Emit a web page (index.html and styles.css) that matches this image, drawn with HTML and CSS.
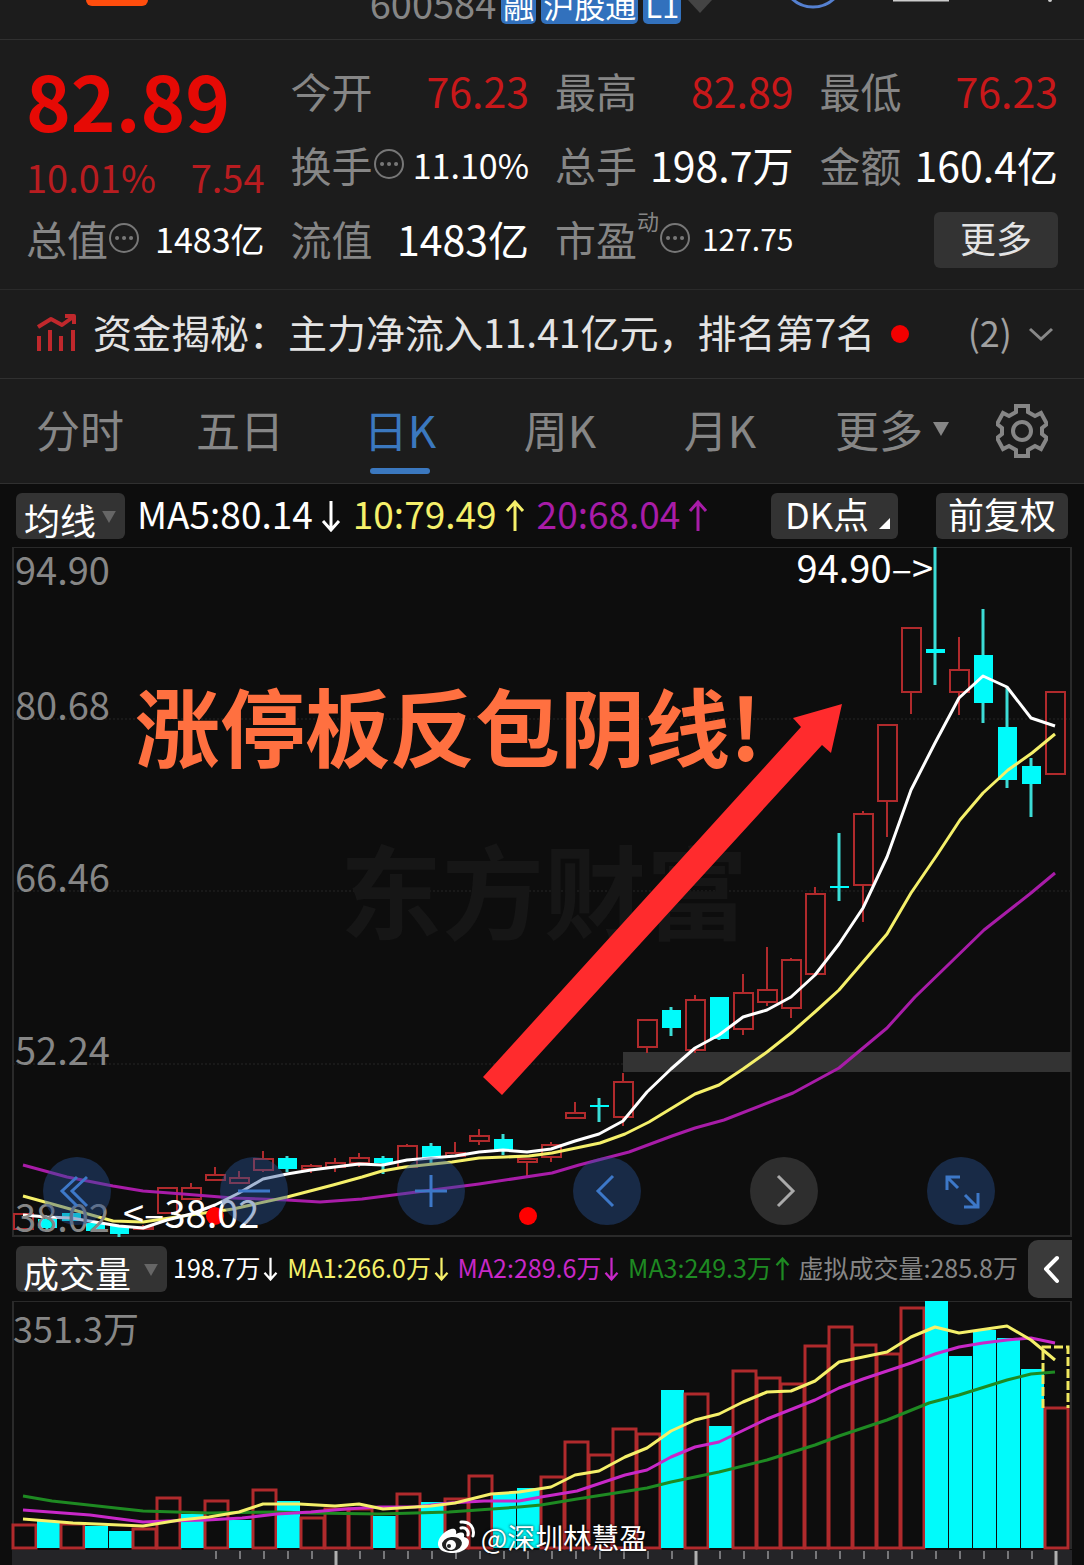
FILE: index.html
```html
<!DOCTYPE html>
<html lang="zh-CN">
<head>
    <meta charset="UTF-8">
    <meta name="viewport" content="width=device-width, initial-scale=1.0">
    <title>600584 日K</title>
    <link rel="stylesheet" href="styles.css">
</head>
<body>
    <header class="topbar">
        <div class="topbar-left"><span class="app-tab"></span></div>
        <div class="stock-code">
            <span class="code">600584</span>
            <span class="badge">融</span>
            <span class="badge">沪股通</span>
            <span class="badge">L1</span>
            <svg class="code-arrow" width="28" height="14" viewBox="0 0 28 14"><path d="M2 0H26L14 13Z" fill="#444"/></svg>
        </div>
        <div class="topbar-right">
            <svg width="264" height="12" viewBox="0 0 264 12">
                <circle cx="25" cy="-24" r="31" fill="none" stroke="#5580d0" stroke-width="3"/>
                <path d="M105 0H161" stroke="#ccc" stroke-width="3"/>
                <circle cx="262" cy="0" r="2" fill="#ccc"/>
            </svg>
        </div>
    </header>

    <section class="quote">
        <div class="price-box">
            <div class="price">82.89</div>
            <div class="change"><span>10.01%</span><span>7.54</span></div>
        </div>
        <div class="cell"><span class="label">今开</span><span class="value up">76.23</span></div>
        <div class="cell"><span class="label">最高</span><span class="value up">82.89</span></div>
        <div class="cell"><span class="label">最低</span><span class="value up">76.23</span></div>
        <div class="cell">
            <span class="label">换手<svg class="info" viewBox="0 0 32 32"><circle cx="16" cy="16" r="14"/><path d="M9 16h.1M16 16h.1M23 16h.1"/></svg></span>
            <span class="value medium">11.10%</span>
        </div>
        <div class="cell"><span class="label">总手</span><span class="value">198.7万</span></div>
        <div class="cell"><span class="label">金额</span><span class="value">160.4亿</span></div>
        <div class="cell">
            <span class="label">总值<svg class="info" viewBox="0 0 32 32"><circle cx="16" cy="16" r="14"/><path d="M9 16h.1M16 16h.1M23 16h.1"/></svg></span>
            <span class="value medium">1483亿</span>
        </div>
        <div class="cell"><span class="label">流值</span><span class="value">1483亿</span></div>
        <div class="cell">
            <span class="label">市盈<sup>动</sup><svg class="info" viewBox="0 0 32 32"><circle cx="16" cy="16" r="14"/><path d="M9 16h.1M16 16h.1M23 16h.1"/></svg></span>
            <span class="value small">127.75</span>
        </div>
        <div class="cell cell-end"><button type="button" class="more-btn">更多</button></div>
    </section>

    <section class="news">
        <svg class="news-icon" viewBox="0 0 40 40">
            <path d="M2 13L15 5L26 11L37 3M29 2H38V10" stroke-linejoin="round"/>
            <path d="M3 22V37M14 16V37M25 22V37M37 16V37"/>
        </svg>
        <a href="#" class="news-text">资金揭秘：主力净流入11.41亿元，排名第7名</a>
        <span class="news-dot"></span>
        <span class="news-count">(2)</span>
        <svg class="news-more" viewBox="0 0 26 16"><path d="M2 3L13 13L24 3"/></svg>
    </section>

    <nav class="tabs">
        <a href="#">分时</a>
        <a href="#">五日</a>
        <a href="#" class="active">日K</a>
        <a href="#">周K</a>
        <a href="#">月K</a>
        <a href="#" class="tab-more">更多<svg width="16" height="14" viewBox="0 0 16 14"><path d="M0 0H16L8 14Z"/></svg></a>
        <button type="button" class="gear" aria-label="设置">
            <svg viewBox="0 0 52 54">
                <path d="M20 2H32V8L39 12L45 9L51 20L46 24V30L51 34L45 45L39 42L32 46V52H20V46L13 42L7 45L1 34L6 30V24L1 20L7 9L13 12L20 8Z"/>
                <circle cx="26" cy="27" r="9"/>
            </svg>
        </button>
    </nav>

    <div class="indicator">
        <div class="picker">
            <select id="maSelect" aria-label="主图指标"><option>均线</option></select>
            <svg class="caret" viewBox="0 0 16 14"><path d="M0 0H16L8 14Z"/></svg>
        </div>
        <div class="ma-values">
            <span class="ma5">MA5:80.14<svg class="arrow" viewBox="0 0 20 32"><path d="M10 1V30M2 21L10 30L18 21"/></svg></span>
            <span class="ma10">10:79.49<svg class="arrow" viewBox="0 0 20 32"><path d="M10 31V2M2 11L10 2L18 11"/></svg></span>
            <span class="ma20">20:68.04<svg class="arrow" viewBox="0 0 20 32"><path d="M10 31V2M2 11L10 2L18 11"/></svg></span>
        </div>
        <button type="button" class="chip dk">DK点<svg width="11" height="11" viewBox="0 0 11 11"><path d="M11 0V11H0Z" fill="#fff"/></svg></button>
        <button type="button" class="chip">前复权</button>
    </div>

    <section class="chart">
        <svg class="plot" viewBox="0 547 1084 690">
            <path class="frame" d="M13 547H1071V1236H13Z"/>
            <path class="grid" d="M13 719H1071M13 891H1071M13 1064H1071"/>
            <text class="brand" x="340" y="932">东方财富</text>
            <rect x="623" y="1052" width="448" height="20" fill="#333"/>
            <g id="candles"></g>
            <polyline class="line ma20" points="23,1165 67,1177 113,1186 143,1191 183,1194 233,1198 287,1200 320,1202 362,1199 409,1193 479,1184 552,1173 579,1165 629,1152 672,1136 695,1128 724,1120 793,1093 839,1068 863,1048 887,1028 915,997 948,965 984,930 1031,893 1055,873"/>
            <polyline class="line ma10" points="23,1196 63,1207 113,1221 143,1222 183,1216 233,1209 287,1197 333,1185 362,1177 382,1171 405,1167 452,1162 479,1158 505,1157 529,1156 552,1153 600,1143 625,1134 649,1122 672,1108 695,1094 719,1085 743,1069 767,1052 791,1033 816,1011 839,990 863,962 887,934 911,893 937,855 960,820 983,793 1008,770 1032,753 1055,734"/>
            <polyline class="line ma5" points="23,1215 47,1217 71,1218 95,1222 119,1226 143,1228 167,1220 191,1214 215,1205 239,1193 263,1179 287,1174 311,1170 335,1167 359,1164 383,1165 407,1160 431,1158 455,1156 479,1152 503,1150 527,1152 551,1149 575,1141 599,1134 623,1121 647,1092 671,1069 695,1048 719,1035 743,1017 767,1010 791,997 815,975 839,944 863,908 887,857 911,790 935,743 959,698 983,676 1007,687 1031,718 1055,726"/>
            <circle cx="215" cy="1216" r="9" fill="#f00"/>
            <circle cx="528" cy="1216" r="9" fill="#f00"/>
            <g class="axis">
                <text x="15" y="585">94.90</text>
                <text x="15" y="720">80.68</text>
                <text x="15" y="892">66.46</text>
                <text x="15" y="1065">52.24</text>
                <text x="15" y="1232">38.02</text>
            </g>
            <text class="mark" x="933" y="583" text-anchor="end">94.90–&gt;</text>
            <text class="mark" x="123" y="1228">&lt;–38.02</text>
            <text class="headline" x="135" y="761">涨停板反包阴线!</text>
            <path d="M842 704L831 753L822 745L502 1095L483 1077L801 727L793 718Z" fill="#ff2b2d"/>
        </svg>
        <div class="chart-tools">
            <button type="button" aria-label="最早"><svg viewBox="0 0 68 68"><path d="M34 20L19 34L34 49M44 20L29 34L44 49"/></svg></button>
            <button type="button" aria-label="缩小"><svg viewBox="0 0 68 68"><path d="M18 34H50"/></svg></button>
            <button type="button" aria-label="放大"><svg viewBox="0 0 68 68"><path d="M18 34H50M34 18V50"/></svg></button>
            <button type="button" aria-label="前移"><svg viewBox="0 0 68 68"><path d="M40 19L25 34L40 49"/></svg></button>
            <button type="button" aria-label="后移" class="off"><svg viewBox="0 0 68 68"><path d="M28 19L43 34L28 49"/></svg></button>
            <button type="button" aria-label="全屏"><svg viewBox="0 0 68 68"><path d="M33 20H20V33M20 20L31 31M51 36V50H37M50 50L38 38"/></svg></button>
        </div>
    </section>

    <div class="indicator volume-bar">
        <div class="picker">
            <select id="volSelect" aria-label="副图指标"><option>成交量</option></select>
            <svg class="caret" viewBox="0 0 16 14"><path d="M0 0H16L8 14Z"/></svg>
        </div>
        <div class="vol-values">
            <span class="ma5">198.7万<svg class="arrow" viewBox="0 0 20 32"><path d="M10 1V30M2 21L10 30L18 21"/></svg></span>
            <span class="ma10">MA1:266.0万<svg class="arrow" viewBox="0 0 20 32"><path d="M10 1V30M2 21L10 30L18 21"/></svg></span>
            <span class="vol-ma2">MA2:289.6万<svg class="arrow" viewBox="0 0 20 32"><path d="M10 1V30M2 21L10 30L18 21"/></svg></span>
            <span class="vol-ma3">MA3:249.3万<svg class="arrow" viewBox="0 0 20 32"><path d="M10 31V2M2 11L10 2L18 11"/></svg></span>
            <span class="virtual">虚拟成交量:285.8万</span>
        </div>
        <button type="button" class="expand" aria-label="展开"><svg viewBox="0 0 44 58"><path d="M29 18L18 29L29 41"/></svg></button>
    </div>

    <section class="chart">
        <svg class="plot" viewBox="0 1301 1084 264">
            <rect x="12" y="1550" width="1060" height="15" fill="#242427"/>
            <path class="frame" d="M13 1549V1301H1071V1549"/>
            <text class="axis-vol" x="13" y="1343">351.3万</text>
            <g id="volumes"></g>
            <path class="forecast" d="M1043 1408V1347H1068V1408"/>
            <polyline class="line vol-ma3" points="23,1496 52,1501 143,1511 209,1513 277,1512 311,1513 380,1514 449,1512 519,1507 541,1505 577,1499 622,1492 647,1488 671,1482 719,1472 767,1460 815,1445 839,1436 887,1420 929,1403 959,1395 1007,1380 1031,1374 1055,1372"/>
            <polyline class="line vol-ma2" points="23,1510 90,1515 143,1522 167,1521 207,1520 242,1518 277,1514 311,1512 346,1509 380,1507 415,1507 449,1503 484,1501 519,1501 541,1497 577,1491 601,1483 625,1475 647,1470 671,1457 695,1447 719,1442 767,1419 815,1400 839,1388 863,1379 911,1363 935,1354 959,1347 983,1343 1007,1340 1031,1338 1055,1343"/>
            <polyline class="line ma10" points="23,1519 73,1523 143,1526 180,1520 209,1517 239,1512 263,1504 299,1504 335,1506 359,1504 383,1509 415,1507 431,1506 455,1503 491,1494 519,1492 551,1487 575,1475 599,1471 625,1457 647,1448 671,1431 695,1420 719,1414 743,1402 767,1392 791,1391 815,1381 839,1362 887,1352 911,1337 935,1327 959,1333 1007,1326 1031,1340 1055,1360"/>
            <g id="ticks"></g>
        </svg>
        <div class="credit">
            <svg viewBox="0 0 38 34">
                <path d="M14 9C7 11 0 19 1 25C2 31 9 33 16 33C25 33 32 28 32 22C32 19 30 18 27 17C28 13 26 11 19 14C20 10 18 8 14 9Z" fill="#fff"/>
                <ellipse cx="15" cy="24" rx="10" ry="7" fill="#222" transform="rotate(-8 15 24)"/>
                <circle cx="14" cy="25" r="5" fill="#fff"/>
                <circle cx="12" cy="26" r="2" fill="#222"/>
                <path d="M24 8C29 7 32 11 31 15M24 2C33 1 38 8 36 16" fill="none" stroke="#fff" stroke-width="3" stroke-linecap="round"/>
            </svg>
            <span>@深圳林慧盈</span>
        </div>
    </section>

    <script>
        const STEP = 24;
        const FIRST_X = 23;

        // [direction, high, body top, body bottom, low]
        const candles = [
            ['up', 1214, 1214, 1229, 1229], ['down', 1218, 1219, 1228, 1230], ['down', 1213, 1213, 1221, 1221],
            ['down', 1223, 1223, 1231, 1231], ['down', 1226, 1226, 1234, 1237], ['up', 1225, 1227, 1229, 1229],
            ['up', 1188, 1188, 1213, 1213], ['up', 1183, 1188, 1199, 1199], ['up', 1167, 1175, 1180, 1180],
            ['up', 1171, 1178, 1183, 1183], ['up', 1151, 1159, 1170, 1172], ['down', 1156, 1158, 1169, 1172],
            ['up', 1164, 1166, 1169, 1173], ['up', 1158, 1163, 1167, 1172], ['up', 1153, 1158, 1163, 1167],
            ['down', 1156, 1158, 1163, 1174], ['up', 1144, 1146, 1167, 1167], ['down', 1143, 1146, 1158, 1163],
            ['up', 1142, 1153, 1156, 1156], ['up', 1129, 1136, 1141, 1145], ['down', 1134, 1139, 1150, 1155],
            ['up', 1158, 1159, 1162, 1176], ['up', 1142, 1145, 1157, 1162], ['up', 1102, 1113, 1118, 1118],
            ['down', 1098, 1105, 1107, 1122], ['up', 1073, 1082, 1117, 1126], ['up', 1020, 1020, 1047, 1053],
            ['down', 1007, 1010, 1028, 1036], ['up', 995, 1000, 1050, 1053], ['down', 997, 997, 1039, 1040],
            ['up', 974, 993, 1029, 1035], ['up', 947, 990, 1002, 1006], ['up', 958, 960, 1008, 1018],
            ['up', 887, 894, 974, 974], ['down', 833, 886, 888, 901], ['up', 811, 814, 885, 922],
            ['up', 725, 725, 801, 837], ['up', 628, 628, 692, 714], ['down', 547, 649, 653, 685],
            ['up', 637, 670, 692, 715], ['down', 609, 655, 703, 723], ['down', 687, 727, 780, 788],
            ['down', 758, 766, 784, 817], ['up', 692, 692, 774, 774]
        ];

        // [direction, top of the bar]
        const VOL_BASE = 1548;
        const volumes = [
            ['up', 1525], ['down', 1521], ['up', 1524], ['down', 1526], ['down', 1531], ['up', 1529],
            ['up', 1498], ['down', 1514], ['up', 1501], ['down', 1520], ['up', 1490], ['down', 1501],
            ['up', 1518], ['up', 1509], ['up', 1509], ['down', 1516], ['up', 1494], ['down', 1502],
            ['up', 1499], ['up', 1476], ['down', 1493], ['down', 1488], ['up', 1477], ['up', 1442],
            ['up', 1455], ['up', 1429], ['up', 1434], ['down', 1390], ['up', 1394], ['down', 1426],
            ['up', 1371], ['up', 1378], ['up', 1384], ['up', 1346], ['up', 1327], ['up', 1345],
            ['up', 1354], ['up', 1308], ['down', 1301], ['down', 1356], ['down', 1330], ['down', 1338],
            ['down', 1369], ['up', 1408]
        ];

        function rect(x, y, width, height, dir) {
            return `<rect class="${dir}" x="${x}" y="${y}" width="${width}" height="${height}"/>`;
        }

        document.getElementById('candles').innerHTML = candles.map(([dir, high, top, bottom, low], i) => {
            const x = FIRST_X + i * STEP;
            const wick = `<path class="wick-${dir}" d="M${x} ${high}V${top}M${x} ${bottom}V${low}"/>`;
            return wick + rect(x - 9, top, 19, bottom - top, dir);
        }).join('');

        document.getElementById('volumes').innerHTML = volumes.map(([dir, top], i) => {
            const x = FIRST_X + i * STEP;
            return rect(x - 10, top, 23, VOL_BASE - top, dir);
        }).join('');

        let ticks = '';
        for (let i = 8; i < 44; i++) {
            const x = FIRST_X + 1 + i * STEP;
            const isLong = (i - 13) % 15 === 0;
            ticks += `<path class="${isLong ? 'tick-long' : 'tick'}" d="M${x} 1551V${isLong ? 1565 : 1559}"/>`;
        }
        document.getElementById('ticks').innerHTML = ticks;
    </script>
</body>
</html>
```
FILE: styles.css
```css
* {
    box-sizing: border-box;
}

body {
    margin: 0;
    background-color: #0d0d0d;
    color: #fff;
    font-family: "Noto Sans CJK SC", "Noto Sans", sans-serif;
}

a {
    color: inherit;
    text-decoration: none;
}

button,
select {
    font-family: inherit;
    border: none;
    padding: 0;
    margin: 0;
    cursor: pointer;
}

/* Top bar, scrolled half out of view */
.topbar {
    display: grid;
    grid-template-columns: 1fr auto 1fr;
    height: 40px;
    overflow: hidden;
    background-color: #1c1c1c;
    border-bottom: 1px solid #303030;
}

.topbar-left {
    padding-left: 86px;
}

.app-tab {
    display: block;
    width: 62px;
    height: 6px;
    border-radius: 0 0 8px 8px;
    background-color: #ff4d0d;
}

.stock-code {
    display: flex;
    align-items: flex-end;
    gap: 5px;
    height: 24px;
    font-size: 31px;
    line-height: 38px;
}

.code {
    color: #868686;
    font-size: 38px;
    line-height: 42px;
}

.badge {
    padding: 0 2px;
    border-radius: 5px;
    background-color: #3271bd;
}

.code-arrow {
    align-self: flex-start;
}

.topbar-right {
    display: flex;
    justify-content: flex-end;
    padding-right: 32px;
}

/* Quote */
.quote {
    display: grid;
    grid-template-columns: repeat(4, 1fr);
    grid-auto-rows: 74px;
    column-gap: 26px;
    padding: 15px 26px 12px;
    background-color: #1c1c1c;
    border-bottom: 1px solid #2a2a2a;
}

.price-box {
    grid-row: span 2;
}

.price {
    color: #e60a05;
    font-size: 76px;
    font-weight: 700;
    line-height: 88px;
}

.change {
    display: flex;
    justify-content: space-between;
    margin-top: 8px;
    color: #b81c20;
    font-size: 38px;
    line-height: 52px;
}

.cell {
    display: flex;
    align-items: center;
    justify-content: space-between;
    padding-bottom: 4px;
    white-space: nowrap;
}

.cell-end {
    justify-content: flex-end;
    padding-bottom: 0;
}

.label {
    display: flex;
    align-items: center;
    color: #868686;
    font-size: 41px;
    line-height: 60px;
}

.label sup {
    align-self: flex-start;
    font-size: 22px;
    line-height: 24px;
}

.info {
    width: 32px;
    height: 32px;
    fill: none;
    stroke: #777;
    stroke-width: 2;
}

.info path {
    stroke-width: 4;
    stroke-linecap: round;
}

.value {
    font-size: 41px;
}

.value.medium {
    font-size: 34px;
}

.value.small {
    font-size: 30px;
}

.value.up {
    color: #c8181a;
}

.more-btn {
    width: 124px;
    height: 56px;
    padding-bottom: 6px;
    border-radius: 6px;
    background-color: #333;
    color: #e4e4e4;
    font-size: 36px;
    line-height: 50px;
}

/* News line */
.news {
    display: flex;
    align-items: center;
    height: 89px;
    padding: 0 30px 0 36px;
    background-color: #1c1c1c;
    border-bottom: 1px solid #303030;
    white-space: nowrap;
}

.news-icon {
    width: 40px;
    height: 40px;
    margin-right: 17px;
    fill: none;
    stroke: #c0282c;
    stroke-width: 4;
}

.news-text {
    padding-bottom: 6px;
    color: #e4e4e4;
    font-size: 39px;
}

.news-dot {
    width: 18px;
    height: 18px;
    margin-left: 16px;
    border-radius: 50%;
    background-color: #f20000;
}

.news-count {
    margin-left: auto;
    padding-bottom: 6px;
    color: #a0a0a0;
    font-size: 36px;
}

.news-more {
    width: 26px;
    height: 16px;
    margin-left: 16px;
    fill: none;
    stroke: #888;
    stroke-width: 3;
}

/* Period tabs */
.tabs {
    display: grid;
    grid-template-columns: repeat(6, 160fr) 124fr;
    align-items: center;
    justify-items: center;
    height: 105px;
    background-color: #1c1c1c;
    border-bottom: 1px solid #303030;
    color: #868686;
    font-size: 44px;
    line-height: 82px;
}

.tabs a {
    padding-bottom: 4px;
}

.tabs .active {
    position: relative;
    color: #3b78bf;
}

.tabs .active::after {
    content: "";
    position: absolute;
    left: 6px;
    right: 6px;
    bottom: 0;
    height: 6px;
    border-radius: 3px;
    background-color: #3b78bf;
}

.tabs .tab-more {
    display: flex;
    align-items: center;
    gap: 10px;
    padding-left: 24px;
}

.tab-more path {
    fill: #868686;
}

.gear {
    background: none;
}

.gear svg {
    display: block;
    width: 52px;
    height: 54px;
    fill: none;
    stroke: #868686;
    stroke-width: 4;
}

/* Indicator rows */
.indicator {
    display: flex;
    align-items: center;
    height: 63px;
    padding: 0 16px;
    white-space: nowrap;
}

.picker {
    position: relative;
}

.picker select {
    display: block;
    height: 46px;
    padding: 0 28px 0 8px;
    border-radius: 6px;
    background-color: #333;
    color: #fff;
    font-size: 36px;
    appearance: none;
}

.caret {
    position: absolute;
    right: 9px;
    top: 18px;
    width: 14px;
    height: 12px;
    fill: #666;
    pointer-events: none;
}

.arrow {
    width: 20px;
    height: 32px;
    margin-left: 8px;
    vertical-align: -3px;
    fill: none;
    stroke-width: 3;
}

.ma-values {
    display: flex;
    gap: 12px;
    flex: 1;
    margin-left: 12px;
    padding-bottom: 6px;
    font-size: 37px;
}

.ma5 {
    color: #fff;
    stroke: #fff;
}

.ma10 {
    color: #f5f06a;
    stroke: #f5f06a;
}

.ma20 {
    color: #a81ca8;
    stroke: #a81ca8;
}

.vol-ma2 {
    color: #c828c8;
    stroke: #c828c8;
}

.vol-ma3 {
    color: #1e8a22;
    stroke: #1e8a22;
}

.virtual {
    color: #868686;
}

.chip {
    height: 46px;
    padding: 0 12px 6px;
    border-radius: 6px;
    background-color: #333;
    color: #fff;
    font-size: 36px;
    line-height: 40px;
}

.chip + .chip {
    margin-left: 38px;
}

.dk {
    padding-right: 8px;
    padding-left: 14px;
}

.dk svg {
    margin-left: 10px;
}

.volume-bar {
    height: 64px;
    padding-right: 12px;
}

.volume-bar select {
    padding: 0 35px 0 7px;
}

.vol-values {
    display: flex;
    align-items: center;
    justify-content: space-between;
    flex: 1;
    margin: 0 10px 0 6px;
    padding-bottom: 4px;
    font-size: 25px;
}

.vol-values .arrow {
    width: 15px;
    height: 24px;
    margin-left: 3px;
}

.expand {
    flex-shrink: 0;
    width: 44px;
    height: 58px;
    border-radius: 10px 0 0 10px;
    background-color: #3a3a3a;
}

.expand svg {
    display: block;
    fill: none;
    stroke: #fff;
    stroke-width: 4;
    stroke-linecap: round;
    stroke-linejoin: round;
}

/* Charts */
.chart {
    position: relative;
}

.plot {
    display: block;
    width: 100%;
    height: auto;
}

.frame {
    fill: none;
    stroke: #2a2a2a;
    stroke-width: 2;
}

.grid {
    stroke: #262626;
    stroke-dasharray: 2 2;
}

.line {
    fill: none;
    stroke-width: 3;
    stroke-linejoin: round;
}

rect.up {
    fill: none;
    stroke: #b02a2c;
    stroke-width: 2;
}

#volumes .up {
    stroke-width: 3;
}

rect.down {
    fill: #00fbfb;
}

.wick-up {
    stroke: #b02a2c;
    stroke-width: 2;
}

.wick-down {
    stroke: #3cdcd6;
    stroke-width: 3;
}

.forecast {
    fill: none;
    stroke: #f0e860;
    stroke-width: 3;
    stroke-dasharray: 9 3;
}

.tick {
    stroke: #77777a;
    stroke-width: 2;
}

.tick-long {
    stroke: #b0b0b0;
    stroke-width: 3;
}

.axis {
    fill: #868686;
    font-size: 38px;
}

.axis-vol {
    fill: #868686;
    font-size: 36px;
}

.mark {
    fill: #fff;
    font-size: 38px;
}

.brand {
    fill: #161616;
    font-size: 102px;
    font-weight: 700;
}

.headline {
    fill: #ff7040;
    font-size: 85px;
    font-weight: 700;
}

.chart-tools {
    position: absolute;
    left: 43px;
    right: 89px;
    bottom: 12px;
    display: flex;
    justify-content: space-between;
}

.chart-tools button {
    width: 68px;
    height: 68px;
    border-radius: 50%;
    background-color: rgba(40, 84, 150, 0.42);
}

.chart-tools svg {
    display: block;
    fill: none;
    stroke: #3d78c8;
    stroke-width: 3;
}

.chart-tools .off {
    background-color: rgba(80, 80, 80, 0.5);
}

.chart-tools .off svg {
    stroke: #aaa;
}

.credit {
    position: absolute;
    left: 0;
    right: 0;
    bottom: 7px;
    display: flex;
    align-items: center;
    justify-content: center;
    gap: 6px;
    font-size: 28px;
    line-height: 42px;
    text-shadow: 0 0 3px #000;
}

.credit svg {
    width: 38px;
    height: 34px;
}
```
